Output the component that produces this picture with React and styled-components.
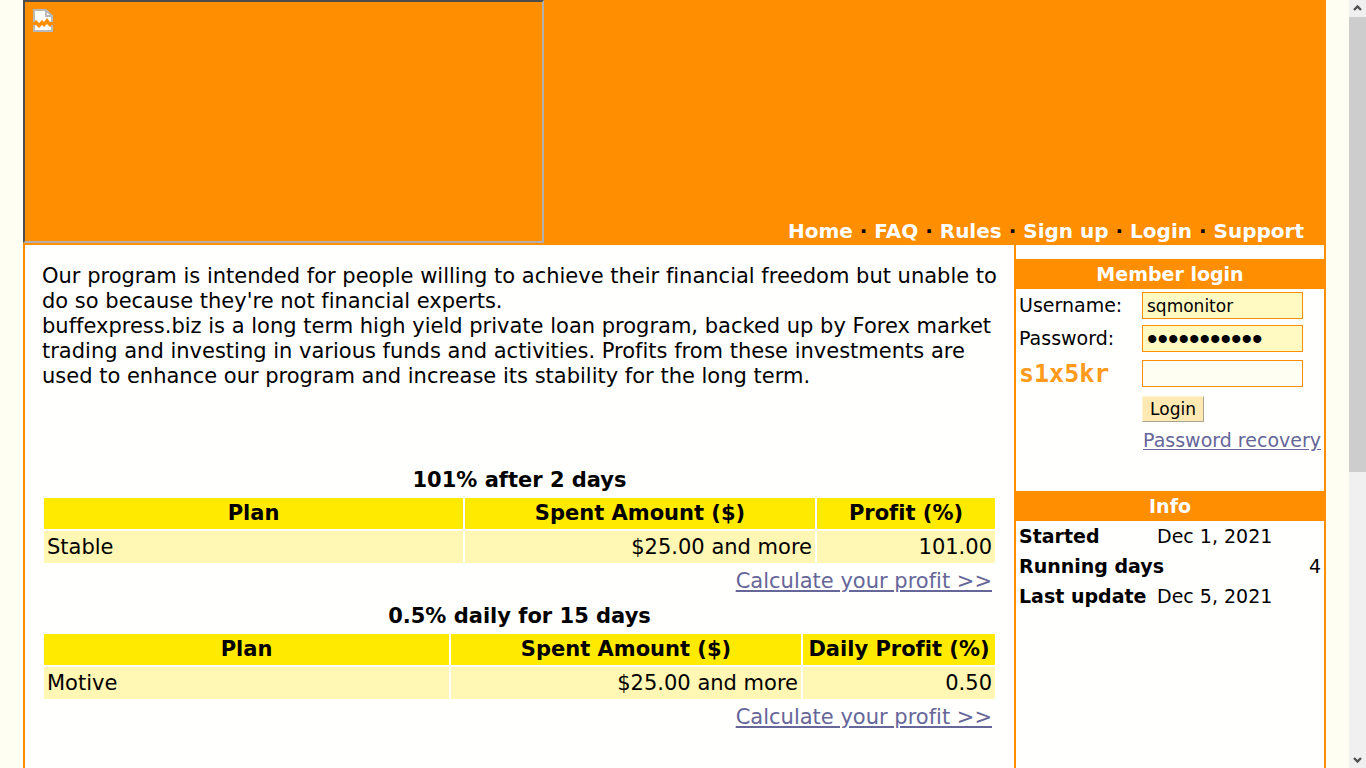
import React, { useState } from "react";
import styled, { createGlobalStyle } from "styled-components";

const links = ["Home", "FAQ", "Rules", "Sign up", "Login", "Support"];

const plans = [
  {
    title: "101% after 2 days",
    name: "Stable",
    amount: "$25.00 and more",
    profitLabel: "Profit (%)",
    profit: "101.00",
    profitWidth: 178
  },
  {
    title: "0.5% daily for 15 days",
    name: "Motive",
    amount: "$25.00 and more",
    profitLabel: "Daily Profit (%)",
    profit: "0.50",
    profitWidth: 192
  }
];

const Arrow = ({ down }) => (
  <ArrowButton type="button" aria-label={down ? "Scroll down" : "Scroll up"}>
    <svg width="17" height="17" viewBox="0 0 17 17">
      <path
        d={down ? "M5 7 L8.5 10.5 L12 7" : "M5 10 L8.5 6.5 L12 10"}
        fill="none"
        stroke="#505050"
        strokeWidth="2.4"
      />
    </svg>
  </ArrowButton>
);

const BrokenImage = () => (
  <svg width="22" height="25" viewBox="0 0 22 25">
    <path
      d="M2 2 H14 L20 8 V13 L18 14 L15 10 L12 14 L10 12 L7 15 L4 12 L2 13 Z"
      fill="#fff"
    />
    <path
      d="M2 14 V2 H14 L20 8 V14 M14 2 V8 H20"
      fill="none"
      stroke="#b9b9b9"
      strokeWidth="2"
    />
    <path
      d="M2 18 L4 17 L7 20 L10 17 L12 19 L15 16 L18 19 L20 18 V23 H2 Z"
      fill="#fff"
    />
    <path
      d="M2 17 V23 H20 V17"
      fill="none"
      stroke="#b9b9b9"
      strokeWidth="2"
    />
  </svg>
);

const Plan = ({ plan }) => (
  <PlanBlock>
    <PlanTable>
      <caption>{plan.title}</caption>
      <colgroup>
        <col />
        <Col $width={350} />
        <Col $width={plan.profitWidth} />
      </colgroup>
      <thead>
        <tr>
          <th>Plan</th>
          <th>Spent Amount ($)</th>
          <th>{plan.profitLabel}</th>
        </tr>
      </thead>
      <tbody>
        <tr>
          <td>{plan.name}</td>
          <NumberCell>{plan.amount}</NumberCell>
          <NumberCell>{plan.profit}</NumberCell>
        </tr>
      </tbody>
    </PlanTable>
    <Calculate>
      <TextLink href="#calculate">Calculate your profit &gt;&gt;</TextLink>
    </Calculate>
  </PlanBlock>
);

function App() {
  const [values, setValues] = useState({
    username: "sqmonitor",
    password: "sqmonitor21",
    code: ""
  });

  const handleInputChange = e => {
    setValues({ ...values, [e.target.name]: e.target.value });
  };

  return (
    <Screen>
      <GlobalStyle />
      <Page>
        <Header>
          <Logo>
            <BrokenImage />
          </Logo>
          <Nav>
            {links.map((link, i) => (
              <React.Fragment key={link}>
                {i > 0 && " · "}
                <a href={"#" + link}>{link}</a>
              </React.Fragment>
            ))}
          </Nav>
        </Header>

        <Body>
          <Main>
            <Intro>
              Our program is intended for people willing to achieve their
              financial freedom but unable to
              <br />
              do so because they're not financial experts.
              <br />
              buffexpress.biz is a long term high yield private loan program,
              backed up by Forex market
              <br />
              trading and investing in various funds and activities. Profits
              from these investments are
              <br />
              used to enhance our program and increase its stability for the
              long term.
            </Intro>
            {plans.map(plan => (
              <Plan key={plan.name} plan={plan} />
            ))}
          </Main>

          <Sidebar>
            <BoxTitle>Member login</BoxTitle>
            <LoginForm onSubmit={e => e.preventDefault()}>
              <label htmlFor="username">Username:</label>
              <Field
                id="username"
                name="username"
                value={values.username}
                onChange={handleInputChange}
                $filled
              />
              <label htmlFor="password">Password:</label>
              <PasswordField
                id="password"
                type="password"
                name="password"
                value={values.password}
                onChange={handleInputChange}
                $filled
              />
              <Captcha htmlFor="code">s1x5kr</Captcha>
              <Field
                id="code"
                name="code"
                value={values.code}
                onChange={handleInputChange}
              />
              <LoginButton type="submit">Login</LoginButton>
              <Recovery>
                <TextLink href="#recovery">Password recovery</TextLink>
              </Recovery>
            </LoginForm>

            <BoxTitle>Info</BoxTitle>
            <InfoTable>
              <tbody>
                <tr>
                  <th scope="row">Started</th>
                  <td>Dec 1, 2021</td>
                </tr>
                <tr>
                  <th scope="row">Running days</th>
                  <NumberCell>4</NumberCell>
                </tr>
                <tr>
                  <th scope="row">Last update</th>
                  <td>Dec 5, 2021</td>
                </tr>
              </tbody>
            </InfoTable>
          </Sidebar>
        </Body>
      </Page>

      <ScrollBar>
        <Arrow />
        <Track>
          <Thumb />
        </Track>
        <Arrow down />
      </ScrollBar>
    </Screen>
  );
}

export default App;

const GlobalStyle = createGlobalStyle`
  body {
    margin: 0;
    background: #fffef2;
    color: #000;
    font-family: "DejaVu Sans", Verdana, sans-serif;
    font-size: 21px;
    line-height: 25px;
    font-variant-ligatures: none;
  }

  * {
    box-sizing: border-box;
  }
`;

const Screen = styled.div`
  display: flex;
  min-height: 100vh;
`;

const Page = styled.div`
  flex: 1;
  display: flex;
  flex-direction: column;
  margin: 0 23px;
`;

const Header = styled.header`
  display: flex;
  justify-content: space-between;
  align-items: flex-end;
  padding-bottom: 2px;
  background: #ff8e00;
`;

const Logo = styled.div`
  width: 40%;
  height: 243px;
  padding: 6px 7px;
  border: 2px solid;
  border-color: #4d4d4d #b0b0b0 #b0b0b0 #4d4d4d;
`;

const Nav = styled.nav`
  padding-right: 22px;
  font-size: 20px;
  font-weight: bold;
  line-height: 23px;
  white-space: nowrap;

  a {
    color: #fff;
    text-decoration: none;
  }
`;

const Body = styled.div`
  flex: 1;
  display: flex;
  background: #fffffd;
  border: solid #ff8e00;
  border-width: 0 2px;
`;

const Main = styled.main`
  flex: 1;
  padding: 19px 17px 0;
`;

const Intro = styled.p`
  margin: 0 0 76px;
  white-space: nowrap;
`;

const PlanBlock = styled.section`
  height: 136px;
`;

const PlanTable = styled.table`
  width: 100%;
  table-layout: fixed;
  border-spacing: 2px;

  caption {
    padding: 3px 0;
    font-weight: bold;
  }

  th,
  td {
    padding: 3px;
    white-space: nowrap;
  }

  th {
    height: 31px;
    background: #ffea00;
  }

  td {
    height: 32px;
    background: #fff7b3;
  }
`;

const Col = styled.col`
  width: ${props => props.$width}px;
`;

const NumberCell = styled.td`
  text-align: right;
`;

const Calculate = styled.div`
  padding: 4px 5px 0 0;
  text-align: right;
`;

const TextLink = styled.a`
  color: #666699;
  text-underline-offset: 2px;
`;

const Sidebar = styled.aside`
  width: 310px;
  padding-top: 14px;
  border-left: 2px solid #ff8e00;
  font-size: 19px;
`;

const BoxTitle = styled.h2`
  margin: 0;
  background: #ff8e00;
  color: #fff;
  font-size: 19px;
  line-height: 30px;
  text-align: center;
`;

const LoginForm = styled.form`
  display: grid;
  grid-template-columns: 123px 1fr;
  grid-template-rows: 33px 33px 37px 33px 31px;
  align-items: center;
  padding: 0 3px 35px;
`;

const Field = styled.input`
  width: 161px;
  height: 27px;
  padding: 0 4px;
  border: 1px solid #ff8e00;
  border-radius: 0;
  background: ${props => (props.$filled ? "#fffac2" : "#fffef2")};
  font-family: inherit;
  font-size: 17px;
  outline: none;
`;

/* larger, tighter bullets than the text face has */
const PasswordField = styled(Field)`
  font-family: "Liberation Sans", Arial, sans-serif;
  font-size: 30px;
`;

const Captcha = styled.label`
  color: #ff9a1a;
  font-family: "DejaVu Sans Mono", monospace;
  font-size: 25px;
  font-weight: bold;
  line-height: 33px;
`;

const LoginButton = styled.button`
  grid-column: 2;
  justify-self: start;
  width: 62px;
  height: 26px;
  padding: 0;
  border: 1px solid;
  border-color: #fff3d6 #a8a48f #a8a48f #fff3d6;
  background: #ffe9b3;
  font-family: inherit;
  font-size: 17px;
`;

const Recovery = styled.div`
  grid-column: 2;
  text-align: right;
  white-space: nowrap;
`;

const InfoTable = styled.table`
  width: 100%;
  table-layout: fixed;
  border-spacing: 0;

  th,
  td {
    height: 30px;
    padding: 0 3px;
    white-space: nowrap;
  }

  th {
    width: 138px;
    text-align: left;
  }
`;

const ScrollBar = styled.div`
  display: flex;
  flex-direction: column;
  width: 17px;
  background: #f0f0f0;
`;

const ArrowButton = styled.button`
  width: 17px;
  height: 17px;
  padding: 0;
  border: 0;
  background: none;

  svg {
    display: block;
  }
`;

const Track = styled.div`
  flex: 1;
`;

const Thumb = styled.div`
  height: 62%;
  background: #cdcdcd;
`;
